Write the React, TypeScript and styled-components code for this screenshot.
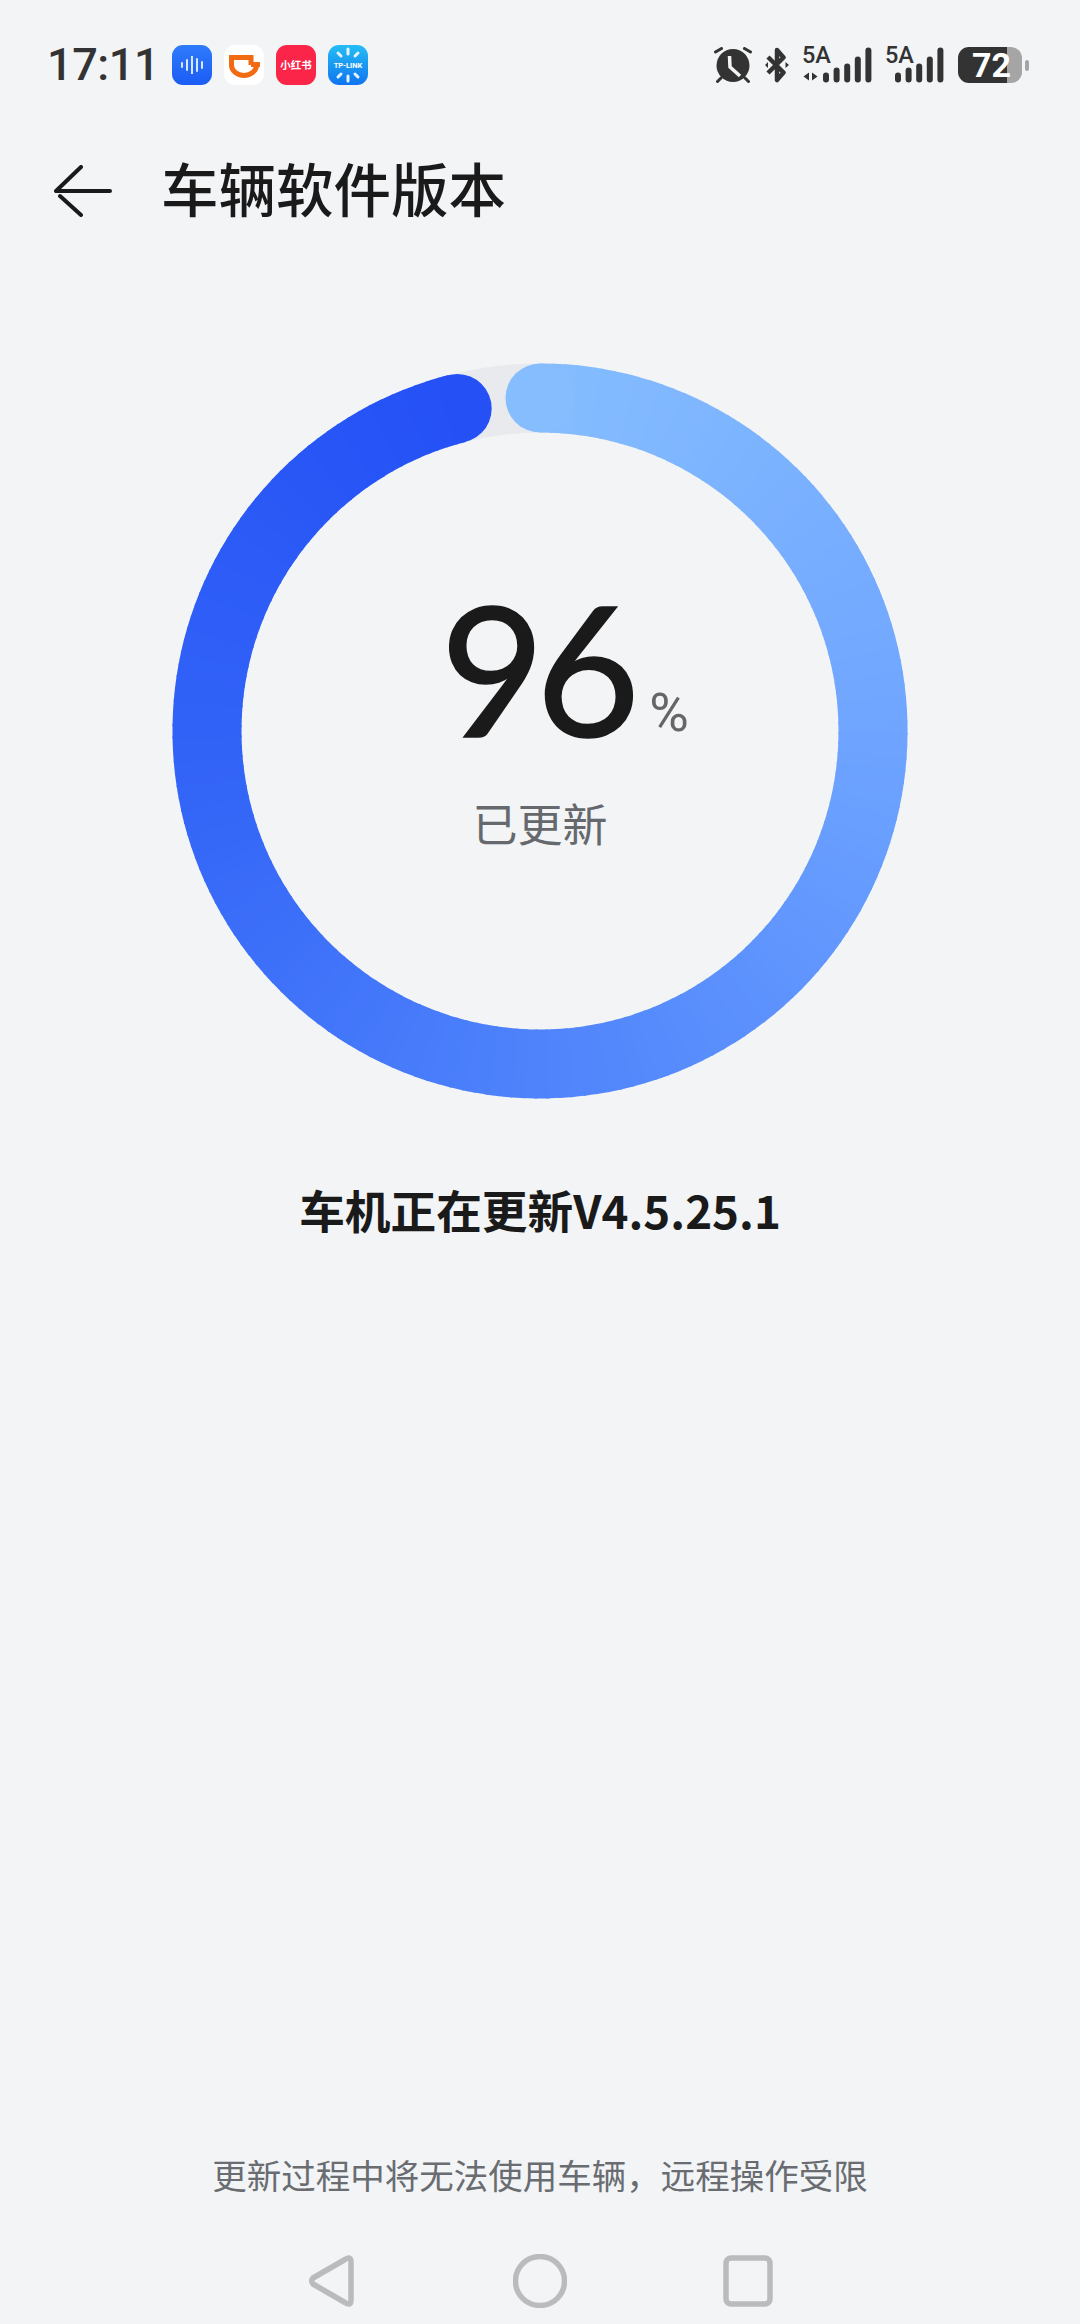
import styled, { createGlobalStyle } from 'styled-components';

const GlobalStyle = createGlobalStyle`
  html, body {
    margin: 0;
    padding: 0;
    background: #f2f4f6;
  }
`;

const Page = styled.div`
  width: 1080px;
  height: 2324px;
  display: flex;
  flex-direction: column;
  align-items: center;
  background: #f2f4f6;
  font-family: Roboto, 'Noto Sans CJK SC', sans-serif;
  overflow: hidden;
`;

const StatusBar = styled.div`
  align-self: stretch;
  height: 40px;
  margin-top: 45px;
  padding: 0 51px 0 47px;
  display: flex;
  align-items: center;
`;

const Clock = styled.span`
  width: 125px;
  font: 500 45px/40px Roboto, sans-serif;
  letter-spacing: -0.4px;
  color: #333;
`;

const AppIcons = styled.div`
  display: flex;
  gap: 12px;
`;

const AppIcon = styled.div<{ $bg: string }>`
  width: 40px;
  height: 40px;
  border-radius: 11px;
  background: ${(p) => p.$bg};
  display: flex;
  align-items: center;
  justify-content: center;
  overflow: hidden;
`;

const RedBookLabel = styled.span`
  font: 700 10.5px/1 'Noto Sans CJK SC', sans-serif;
  color: #fff;
  white-space: nowrap;
`;

const StatusIcons = styled.div`
  margin-left: auto;
  display: flex;
  align-items: center;
  gap: 13px;
`;

const SignalCell = styled.div<{ $width: number }>`
  position: relative;
  width: ${(p) => p.$width}px;
  height: 36px;
`;

const SignalLabel = styled.span`
  position: absolute;
  top: -2px;
  left: 0;
  font: 500 23.5px/20px Roboto, sans-serif;
  color: #333;
`;

const BatteryWrap = styled.div`
  display: flex;
  align-items: center;
  gap: 3px;
`;

const BatteryBody = styled.div<{ $level: number }>`
  width: 64px;
  height: 36px;
  box-sizing: border-box;
  padding-left: 14px;
  border-radius: 11px;
  background: linear-gradient(90deg, #333 ${(p) => p.$level}%, #a5a5a5 ${(p) => p.$level}%);
  font: 700 34px/36px Roboto, sans-serif;
  color: #fff;
`;

const BatteryTip = styled.div`
  width: 4px;
  height: 11px;
  border-radius: 2px;
  background: #a5a5a5;
`;

const NavBar = styled.div`
  align-self: stretch;
  height: 100px;
  margin-top: 56px;
  padding-left: 54px;
  display: flex;
  align-items: center;
`;

const BackButton = styled.div`
  width: 58px;
  height: 52px;
  margin-right: 49px;
  display: flex;
`;

const PageTitle = styled.h1`
  margin: 0 0 6px;
  font: 500 57.5px/1 'Noto Sans CJK SC', sans-serif;
  color: #1a1a1a;
`;

const RingWrap = styled.div`
  position: relative;
  width: 736px;
  height: 736px;
  margin-top: 122px;
`;

const RingCentre = styled.div`
  position: absolute;
  inset: 0;
  display: flex;
  flex-direction: column;
  align-items: center;
  padding-top: 204px;
  box-sizing: border-box;
`;

const ValueRow = styled.div`
  display: flex;
  align-items: flex-end;
  padding-left: 49px;
`;

const Value = styled.span`
  font: 400 180px/200px Lato, sans-serif;
  letter-spacing: -9px;
  -webkit-text-stroke: 1.5px #1a1a1a;
  color: #1a1a1a;
`;

const Percent = styled.span`
  font: 400 54px/1 Roboto, sans-serif;
  margin: 0 0 27px 18px;
  color: #666;
`;

const ValueCaption = styled.div`
  margin-top: 33px;
  font: 400 45px/1 'Noto Sans CJK SC', sans-serif;
  color: #65686c;
`;

const UpdateTitle = styled.div`
  margin-top: 80px;
  font: 700 45.7px/60px 'Noto Sans CJK SC', sans-serif;
  color: #1a1a1a;
`;

const Notice = styled.div`
  margin-top: auto;
  font: 400 34.5px/1 'Noto Sans CJK SC', sans-serif;
  color: #696c70;
`;

const SystemNav = styled.div`
  margin-top: 63px;
  margin-bottom: 16px;
  padding-left: 2px;
  height: 54px;
  display: flex;
  align-items: center;
`;

const SystemButton = styled.svg<{ $width: number }>`
  display: block;
  width: ${(p) => p.$width}px;
  height: 54px;
  fill: none;
  stroke: #b9bbbd;
  stroke-width: 5.5;
  stroke-linejoin: round;
`;

const SystemGap = styled.div<{ $width: number }>`
  width: ${(p) => p.$width}px;
`;

const STOPS = [
  [0, [133, 189, 255]],
  [0.25, [112, 166, 255]],
  [0.5, [81, 134, 252]],
  [0.75, [51, 101, 247]],
  [1, [36, 80, 246]]
] as const;

const colorAt = (t: number) => {
  for (let i = 1; i < STOPS.length; i++) {
    const [t0, c0] = STOPS[i - 1];
    const [t1, c1] = STOPS[i];
    if (t <= t1) {
      const k = (t - t0) / (t1 - t0);
      return `rgb(${c0.map((v, n) => Math.round(v + (c1[n] - v) * k)).join(',')})`;
    }
  }
  return 'rgb(36,80,246)';
};

const polar = (deg: number, r: number, c = 368) => {
  const a = (deg * Math.PI) / 180;
  return [c + r * Math.sin(a), c - r * Math.cos(a)];
};

const ProgressRing = ({ percent }: { percent: number }) => {
  const R = 333;
  const W = 69;
  const sweep = (percent / 100) * 360;
  const steps = 180;
  const end = polar(sweep, R);
  const start = polar(0, R);
  return (
    <svg width="736" height="736" viewBox="0 0 736 736" fill="none">
      <circle cx="368" cy="368" r={R} stroke="#e8eaed" strokeWidth={W} />
      <circle cx={end[0]} cy={end[1]} r={W / 2} fill={colorAt(1)} />
      {Array.from({ length: steps }, (_, i) => {
        const a0 = (i / steps) * sweep;
        const a1 = ((i + 1) / steps) * sweep + 0.4;
        const [x0, y0] = polar(a0, R);
        const [x1, y1] = polar(Math.min(a1, sweep), R);
        return (
          <path
            key={i}
            d={`M${x0} ${y0}A${R} ${R} 0 0 1 ${x1} ${y1}`}
            stroke={colorAt((i + 0.5) / steps)}
            strokeWidth={W}
          />
        );
      })}
      <circle cx={start[0]} cy={start[1]} r={W / 2} fill={colorAt(0)} />
    </svg>
  );
};

const SignalIcon = ({ withArrows }: { withArrows?: boolean }) => {
  const heights = [10, 15, 19, 26, 35];
  const offset = withArrows ? 21 : 10;
  const width = withArrows ? 70 : 60;
  const pitch = 10.6;
  return (
    <SignalCell $width={width}>
      <svg width={width} height="36" viewBox={`0 0 ${width} 36`}>
        {withArrows && <path d="M7 25.5l-5.5 4 5.5 4zM10 25.5l5.5 4-5.5 4z" fill="#333" />}
        {heights.map((h, i) => (
          <rect key={i} x={offset + i * pitch} y={35.5 - h} width="6" height={h} rx="3" fill="#333" />
        ))}
      </svg>
      <SignalLabel>5A</SignalLabel>
    </SignalCell>
  );
};

const App = () => {
  return (
    <Page>
      <GlobalStyle />
      <StatusBar>
        <Clock>17:11</Clock>
        <AppIcons>
          <AppIcon $bg="linear-gradient(180deg, #2f7bfb, #1a5cf5)">
            <svg width="30" height="18" viewBox="0 0 30 18" stroke="#d8e6ff" strokeWidth="2" strokeLinecap="round">
              <path d="M3 7v4M8 4v10M13 0.5v17M18 3v12M23 6v6" transform="translate(2)" />
            </svg>
          </AppIcon>
          <AppIcon $bg="#fff">
            <svg width="40" height="40" viewBox="0 0 40 40" fill="none" stroke="#f26a12" strokeWidth="5">
              <path d="M5 12.5H27V20M7.5 10v10a12.5 10.5 0 0 0 25 0M27 19.5H36" />
            </svg>
          </AppIcon>
          <AppIcon $bg="#fb2549">
            <RedBookLabel>小红书</RedBookLabel>
          </AppIcon>
          <AppIcon $bg="linear-gradient(180deg, #25bdf5, #0f74f0)">
            <svg width="40" height="40" viewBox="0 0 40 40">
              <g stroke="#e4f5ff" strokeWidth="3" strokeLinecap="round">
                <path d="M20 4v5M20 31v5M10 8l3 3M30 8l-3 3M10 32l3-3M30 32l-3-3" />
              </g>
              <text x="20" y="23" textAnchor="middle" fontFamily="Roboto, sans-serif" fontWeight="700" fontSize="7.5" fill="#fff">
                TP-LINK
              </text>
            </svg>
          </AppIcon>
        </AppIcons>
        <StatusIcons>
          <svg width="38" height="36" viewBox="0 0 38 36">
            <circle cx="19" cy="18.5" r="16.5" fill="#333" />
            <path d="M15.5 9l.5 11 10 9" fill="none" stroke="#f2f4f6" strokeWidth="3.5" />
            <path d="M1.5 5l6-3.5M36.5 5l-6-3.5M7 31l-3.5 3.5M31 31l3.5 3.5" stroke="#333" strokeWidth="3" strokeLinecap="round" />
          </svg>
          <svg width="24" height="36" viewBox="0 0 24 36" fill="none">
            <path d="M3 10l15.5 15.5L12 33V3l6.5 7.5L3 26" stroke="#333" strokeWidth="4.5" strokeLinejoin="round" />
            <path d="M20.5 15l3.5 3-3.5 3zM3 15l-3 3 3 3z" fill="#333" />
          </svg>
          <SignalIcon withArrows />
          <SignalIcon />
          <BatteryWrap>
            <BatteryBody $level={77}>72</BatteryBody>
            <BatteryTip />
          </BatteryWrap>
        </StatusIcons>
      </StatusBar>

      <NavBar>
        <BackButton>
          <svg width="58" height="52" viewBox="0 0 58 52" fill="none" stroke="#1a1a1a" strokeWidth="4" strokeLinecap="round">
            <path d="M2 26H56M2 26L27 2M6 31L27 50" />
          </svg>
        </BackButton>
        <PageTitle>车辆软件版本</PageTitle>
      </NavBar>

      <RingWrap>
        <ProgressRing percent={96} />
        <RingCentre>
          <ValueRow>
            <Value>96</Value>
            <Percent>%</Percent>
          </ValueRow>
          <ValueCaption>已更新</ValueCaption>
        </RingCentre>
      </RingWrap>

      <UpdateTitle>车机正在更新V4.5.25.1</UpdateTitle>

      <Notice>更新过程中将无法使用车辆，远程操作受限</Notice>

      <SystemNav>
        <SystemButton $width={46} viewBox="0 0 46 54">
          <path d="M37 5.5Q43 1.5 43 8V46Q43 52.5 37 48.5L5 30Q2.5 27 5 24Z" />
        </SystemButton>
        <SystemGap $width={159} />
        <SystemButton $width={54} viewBox="0 0 54 54">
          <circle cx="27" cy="27" r="24.5" />
        </SystemButton>
        <SystemGap $width={154} />
        <SystemButton $width={54} viewBox="0 0 54 54">
          <rect x="5" y="4" width="44" height="46" rx="5" />
        </SystemButton>
      </SystemNav>
    </Page>
  );
};

export default App;
